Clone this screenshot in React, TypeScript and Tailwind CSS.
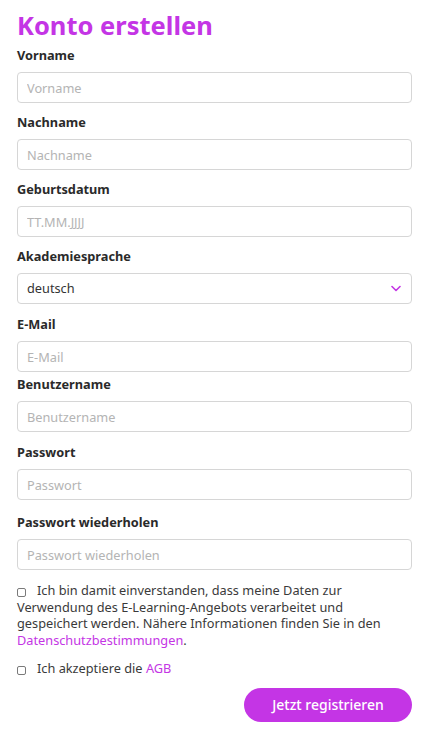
import { useState } from "react";

const inputClassName =
  "block h-[31px] w-full rounded-[4px] border border-[#d6d6d6] bg-white px-[9px] text-[12.75px] text-[#333] outline-none placeholder:text-[#b4b4b4]";

const labelClassName =
  "mb-2 block text-[12.75px] leading-[18px] font-bold text-[#2a2a2a]";

type Field = {
  id: string;
  label: string;
  placeholder: string;
  type?: string;
  gap: string;
};

const fields: Field[] = [
  { id: "vorname", label: "Vorname", placeholder: "Vorname", gap: "mt-[5px]" },
  { id: "nachname", label: "Nachname", placeholder: "Nachname", gap: "mt-[10px]" },
  { id: "geburtsdatum", label: "Geburtsdatum", placeholder: "TT.MM.JJJJ", gap: "mt-[10px]" },
];

const fieldsAfter: Field[] = [
  { id: "email", label: "E-Mail", placeholder: "E-Mail", type: "email", gap: "mt-[11px]" },
  { id: "benutzername", label: "Benutzername", placeholder: "Benutzername", gap: "mt-[3px]" },
  { id: "passwort", label: "Passwort", placeholder: "Passwort", type: "password", gap: "mt-[11px]" },
  {
    id: "passwort2",
    label: "Passwort wiederholen",
    placeholder: "Passwort wiederholen",
    type: "password",
    gap: "mt-[13px]",
  },
];

function TextField({ field }: { field: Field }) {
  return (
    <div className={field.gap}>
      <label className={labelClassName} htmlFor={field.id}>
        {field.label}
      </label>
      <input
        id={field.id}
        type={field.type === "password" ? "text" : field.type ?? "text"}
        placeholder={field.placeholder}
        className={inputClassName}
      />
    </div>
  );
}

function Check({ checked, onToggle }: { checked: boolean; onToggle: () => void }) {
  return (
    <button
      type="button"
      onClick={onToggle}
      className="mr-[11px] inline-block h-[9px] w-[9px] rounded-[2px] border border-[#7a7a7a] bg-white align-[-0.5px]"
    >
      {checked ? <span className="block h-full w-full bg-[#c435e5]" /> : null}
    </button>
  );
}

export default function App() {
  const [privacy, setPrivacy] = useState(false);
  const [terms, setTerms] = useState(false);

  return (
    <div className="min-h-[731px] bg-white font-['Noto_Sans',sans-serif]">
      <form className="ml-[17px] w-[395px] pt-[9px]" noValidate>
        <h1 className="text-[25.5px] leading-[32px] font-bold text-[#c435e5]">
          Konto erstellen
        </h1>

        {fields.map((field) => (
          <TextField key={field.id} field={field} />
        ))}

        <div className="mt-[10px]">
          <label className={labelClassName} htmlFor="sprache">
            Akademiesprache
          </label>
          <div className="relative">
            <select
              id="sprache"
              defaultValue="deutsch"
              className={inputClassName + " appearance-none"}
            >
              <option value="deutsch">deutsch</option>
              <option value="english">english</option>
            </select>
            <svg
              className="pointer-events-none absolute top-[12px] right-[11px]"
              width="10"
              height="7"
              viewBox="0 0 10 7"
              fill="none"
            >
              <path
                d="M1 1.5l4 4 4-4"
                stroke="#c435e5"
                strokeWidth="1.6"
                strokeLinecap="round"
                strokeLinejoin="round"
              />
            </svg>
          </div>
        </div>

        {fieldsAfter.map((field) => (
          <TextField key={field.id} field={field} />
        ))}

        <p className="mt-[12px] text-[12.75px] leading-[16.5px] text-[#3a3a3a]">
          <Check checked={privacy} onToggle={() => setPrivacy(!privacy)} />
          Ich bin damit einverstanden, dass meine Daten zur Verwendung des
          E-Learning-Angebots verarbeitet und gespeichert werden. Nähere
          Informationen finden Sie in den{" "}
          <a href="#" className="text-[#c435e5]">
            Datenschutzbestimmungen
          </a>
          .
        </p>

        <p className="mt-[12px] text-[12.75px] leading-[16.5px] text-[#3a3a3a]">
          <Check checked={terms} onToggle={() => setTerms(!terms)} />
          Ich akzeptiere die{" "}
          <a href="#" className="text-[#c435e5]">
            AGB
          </a>
        </p>

        <div className="mt-[11px] flex justify-end">
          <button
            type="submit"
            className="h-[34px] w-[168px] rounded-full bg-[#c435e5] text-[14px] font-medium text-white"
          >
            Jetzt registrieren
          </button>
        </div>
      </form>
    </div>
  );
}
